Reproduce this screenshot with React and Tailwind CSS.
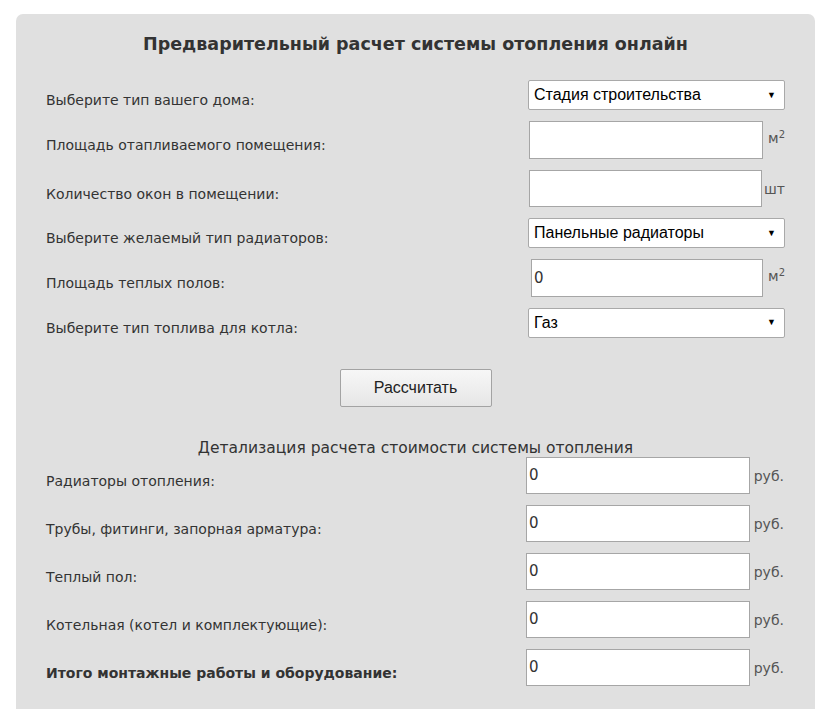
import React from 'react';

const labelFont = { fontFamily: '"DejaVu Sans", Verdana, sans-serif' };

const Select = ({ value }) => (
  <div className="w-[257px] h-[30px] bg-white border border-[#a9a9a9] rounded-[2px] flex items-center justify-between pl-[5px] pr-[8px] font-['Liberation_Sans',Arial,sans-serif] text-[16px] leading-none text-black">
    <span>{value}</span>
    <span className="text-[9px]">▼</span>
  </div>
);

const NumInput = ({ value, width = 'w-[234px]', height = 'h-[38px]' }) => (
  <div className={`${width} ${height} bg-white border border-[#a6a6a6] flex items-center pl-[2px] text-[15px] leading-none text-[#333] font-['DejaVu_Sans',Verdana,sans-serif]`}>
    {value}
  </div>
);

const Row = ({ label, bold, h, children }) => (
  <div className={`flex items-center justify-between ${h}`}>
    <span
      className={`translate-y-[5px] text-[14px] leading-[20px] text-[#333] ${bold ? 'font-bold' : ''}`}
      style={labelFont}
    >
      {label}
    </span>
    {children}
  </div>
);

const Unit = ({ children }) => (
  <span className="text-[14px] leading-none text-[#555] font-['DejaVu_Sans',Verdana,sans-serif]">{children}</span>
);

const M2 = () => (
  <span className="text-[14px] leading-none text-[#555] font-['DejaVu_Sans',Verdana,sans-serif] -mt-[4px]">
    м<sup className="text-[10px]">2</sup>
  </span>
);

export default function App() {
  const details = [
    'Радиаторы отопления:',
    'Трубы, фитинги, запорная арматура:',
    'Теплый пол:',
    'Котельная (котел и комплектующие):',
  ];

  return (
    <div className="min-h-screen bg-white pt-[14px] pl-[16px] w-[830px]">
      <div className="w-[799px] bg-[#e0e0e0] rounded-[7px] pl-[30px] pr-[30px] pt-[22px] pb-[30px]">
        <h1
          className="text-center font-bold text-[17.5px] text-[#333] leading-none h-[18px] mb-[26px]"
          style={labelFont}
        >
          Предварительный расчет системы отопления онлайн
        </h1>

        <div className="flex flex-col">
          <Row h="h-[30px]" label="Выберите тип вашего дома:">
            <Select value="Стадия строительства" />
          </Row>
          <Row h="h-[38px] mt-[11px]" label="Площадь отапливаемого помещения:">
            <div className="w-[257px] flex items-center justify-between pl-[1px]">
              <NumInput value="" />
              <M2 />
            </div>
          </Row>
          <Row h="h-[37px] mt-[11px]" label="Количество окон в помещении:">
            <div className="w-[257px] flex items-center justify-between pl-[1px]">
              <NumInput value="" width="w-[233px]" height="h-[37px]" />
              <Unit>шт</Unit>
            </div>
          </Row>
          <Row h="h-[30px] mt-[11px]" label="Выберите желаемый тип радиаторов:">
            <Select value="Панельные радиаторы" />
          </Row>
          <Row h="h-[38px] mt-[11px]" label="Площадь теплых полов:">
            <div className="w-[257px] flex items-center justify-between pl-[3px]">
              <NumInput value="0" width="w-[232px]" />
              <M2 />
            </div>
          </Row>
          <Row h="h-[31px] mt-[10px]" label="Выберите тип топлива для котла:">
            <Select value="Газ" />
          </Row>
        </div>

        <div className="flex justify-center mt-[31px]">
          <button className="w-[152px] h-[38px] border border-[#a3a3a3] rounded-[2px] bg-gradient-to-b from-[#f7f7f7] to-[#e6e6e6] text-[16px] text-[#222] font-['Liberation_Sans',Arial,sans-serif]">
            Рассчитать
          </button>
        </div>

        <h2
          className="text-center text-[15.5px] text-[#333] mt-[34px] leading-none h-[16px]"
          style={labelFont}
        >
          Детализация расчета стоимости системы отопления
        </h2>

        <div className="flex flex-col gap-[11px]">
          {details.map((d) => (
            <Row key={d} h="h-[37px]" label={d}>
              <div className="w-[259px] flex items-center justify-between pr-[1px]">
                <NumInput value="0" width="w-[224px]" height="h-[37px]" />
                <Unit>руб.</Unit>
              </div>
            </Row>
          ))}
          <Row h="h-[37px]" label="Итого монтажные работы и оборудование:" bold>
            <div className="w-[259px] flex items-center justify-between pr-[1px]">
              <NumInput value="0" width="w-[224px]" height="h-[37px]" />
              <Unit>руб.</Unit>
            </div>
          </Row>
        </div>
      </div>
    </div>
  );
}
